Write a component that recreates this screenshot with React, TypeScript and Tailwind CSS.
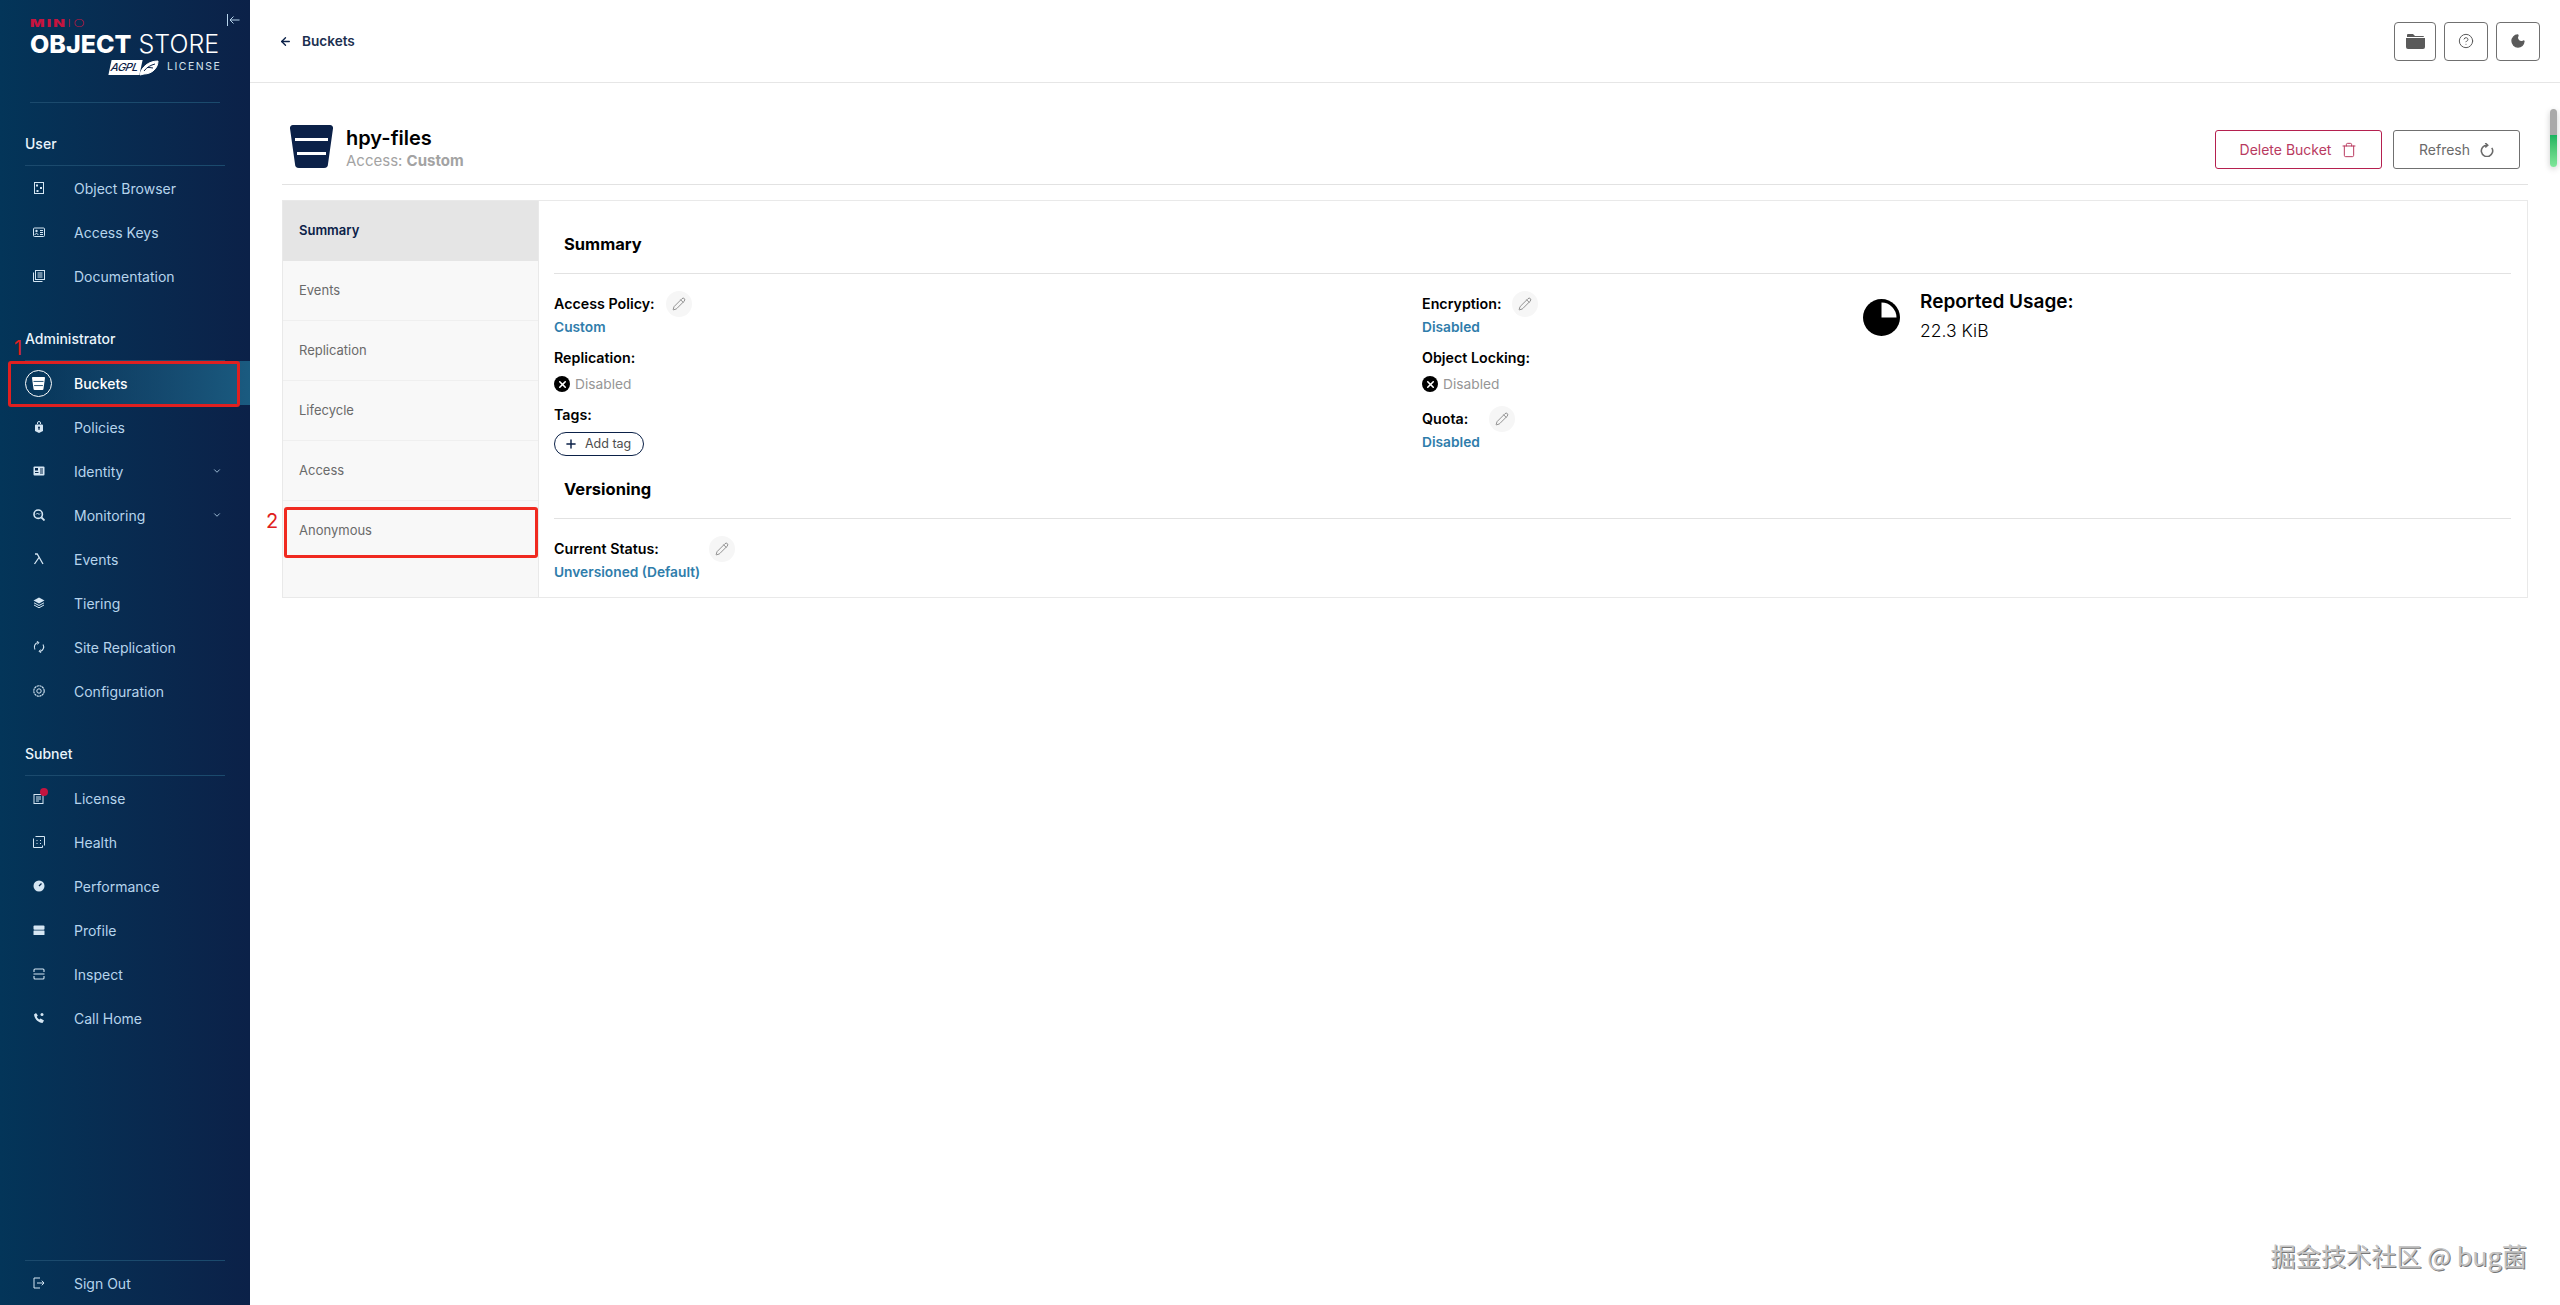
import { ReactNode } from "react";
import { ArrowLeft, ChevronDown, CircleHelp, Moon, Pencil, Plus, Trash, X } from "lucide-react";

type navItem = { label: string; icon: ReactNode; chevron?: boolean; active?: boolean };

const Svg = ({ children, className = "" }: { children: ReactNode; className?: string }) => (
    <svg viewBox="0 0 12 12" className={`w-[12px] h-[12px] ${className}`} fill="none" stroke="currentColor" strokeWidth="1">
        {children}
    </svg>
);

// Icones do menu lateral
const icons = {
    browser: <Svg><rect x="1.5" y="0.5" width="9" height="11" /><rect x="3" y="2.5" width="2" height="2" fill="currentColor" stroke="none" /><rect x="7" y="5" width="2" height="2" fill="currentColor" stroke="none" /><rect x="3.5" y="8" width="2" height="2" fill="currentColor" stroke="none" /></Svg>,
    keys: <Svg><rect x="0.5" y="2" width="11" height="8.5" rx="1" /><circle cx="3.5" cy="5" r="1.2" fill="currentColor" stroke="none" /><path d="M2 9c0-2 3-2 3 0M7 4.5h3M7 6.5h3M7 8.5h3" /></Svg>,
    docs: <Svg><rect x="2.5" y="0.5" width="9" height="9" /><path d="M0.5 2.5v9h9M4.5 3h5M4.5 5h5M4.5 7h5" /></Svg>,
    policies: <Svg><path d="M3 3.5h6a1 1 0 0 1 1 1V10l-4 2-4-2V4.500a1 1 0 0 1 1-1z" fill="currentColor" stroke="none" /><path d="M4.500 3V2a1.500 1.500 0 0 1 3 0v1" /><circle cx="6" cy="6.500" r="1" fill="#06284c" stroke="none" /><rect x="5.500" y="7" width="1" height="2" fill="#06284c" stroke="none" /></Svg>,
    identity: <Svg><rect x="0.500" y="1.500" width="11" height="9" rx="1" fill="currentColor" stroke="none" /><rect x="2" y="3" width="3" height="2.500" fill="#06284c" stroke="none" /><path d="M2 7.500h3.500M7 4h3M7 6h3M7 8h3" stroke="#06284c" /></Svg>,
    monitoring: <Svg><circle cx="5.200" cy="5.200" r="4.200" strokeWidth="1.600" /><path d="M8.500 8.500L11.500 11.500" strokeWidth="1.800" /><path d="M3 5.500l1.500-1.500 1.500 1.500 1-1" /></Svg>,
    events: <Svg><path d="M2 1h2.200L10 11M6 4.500L1.500 11" strokeWidth="1.300" /></Svg>,
    tiering: <Svg><path d="M6 0.500L11.500 3.500 6 6.500 0.500 3.500z" fill="currentColor" stroke="none" /><path d="M1 5.800L6 8.500l5-2.700M1 8L6 10.800 11 8" /></Svg>,
    replication: <Svg><path d="M2 8.500A4.700 4.700 0 0 1 5 1.500M10 3.500A4.700 4.700 0 0 1 7 10.500" strokeWidth="1.100" /><path d="M3.800 0.300L6 1.600 4.300 3.500M8.200 11.700L6 10.400 7.700 8.500" /></Svg>,
    config: <Svg><circle cx="6" cy="6" r="5.200" strokeDasharray="2.200 0.500" strokeWidth="1.100" /><circle cx="6" cy="6" r="2.200" /></Svg>,
    license: <Svg><rect x="1" y="2.500" width="9" height="9" /><path d="M3 5h5M3 7h5M3 9h3" /></Svg>,
    health: <Svg><path d="M2.500 0.500h9v9M0.500 2.500v9h9v-2" /><path d="M3.500 4.500h1M7 4.500h1M3.500 7.500h1M7 7.500h1" /></Svg>,
    performance: <Svg><circle cx="6" cy="6" r="5.500" fill="currentColor" stroke="none" /><path d="M6 6L8.500 3.500" stroke="#06284c" strokeWidth="1.200" /></Svg>,
    profile: <Svg><rect x="0.500" y="1.500" width="11" height="4.300" rx="1" fill="currentColor" stroke="none" /><rect x="0.500" y="6.600" width="11" height="4.300" rx="0.500" fill="currentColor" stroke="none" /></Svg>,
    inspect: <Svg><path d="M1 4V2a1 1 0 0 1 1-1h8a1 1 0 0 1 1 1v2M1 8v2a1 1 0 0 0 1 1h8a1 1 0 0 0 1-1V8M0.500 6h11" strokeWidth="1.100" /></Svg>,
    call: <Svg><path d="M1 2.500L3 1l1.800 2.600-1 1.200c.5 1.300 1.300 2.100 2.600 2.700l1.200-1L11 8.500 9.500 11C5 10.500 1.500 7 1 2.500z" fill="currentColor" stroke="none" /><circle cx="9" cy="2.500" r="1.500" fill="currentColor" stroke="none" /></Svg>,
    signOut: <Svg><path d="M7 1H1v10h6" /><path d="M4 6h7M8.800 3.700L11 6 8.800 8.300" /></Svg>,
};

const userItems: navItem[] = [
    { label: "Object Browser", icon: icons.browser },
    { label: "Access Keys", icon: icons.keys },
    { label: "Documentation", icon: icons.docs },
];

const adminItems: navItem[] = [
    { label: "Buckets", active: true, icon: null },
    { label: "Policies", icon: icons.policies },
    { label: "Identity", icon: icons.identity, chevron: true },
    { label: "Monitoring", icon: icons.monitoring, chevron: true },
    { label: "Events", icon: icons.events },
    { label: "Tiering", icon: icons.tiering },
    { label: "Site Replication", icon: icons.replication },
    { label: "Configuration", icon: icons.config },
];

const subnetItems: navItem[] = [
    { label: "License", icon: <span className="relative flex">{icons.license}<span className="absolute -top-[4px] left-[7px] w-[8px] h-[8px] rounded-full bg-[#c5143f]" /></span> },
    { label: "Health", icon: icons.health },
    { label: "Performance", icon: icons.performance },
    { label: "Profile", icon: icons.profile },
    { label: "Inspect", icon: icons.inspect },
    { label: "Call Home", icon: icons.call },
];

const tabs = ["Summary", "Events", "Replication", "Lifecycle", "Access", "Anonymous"];

const BucketGlyph = ({ className, bars }: { className: string; bars: string }) => (
    <svg viewBox="0 0 43 43" className={className}>
        <path d="M3 0h37a3 3 0 0 1 3 3.500L38 39a4 4 0 0 1-4 4H9a4 4 0 0 1-4-4L0 3.500A3 3 0 0 1 3 0z" fill="currentColor" />
        <rect x="5" y="13" width="33" height="3" fill={bars} />
        <rect x="7" y="27" width="29" height="3" fill={bars} />
    </svg>
);

function NavRow({ item }: { item: navItem }) {
    return (
        <div className={`h-[44px] flex items-center text-[14px] ${item.active ? "bg-gradient-to-r from-transparent to-[#1a5b80] text-white font-medium" : "text-[#b6d4ec]"}`}>
            <div className="w-[74px] pl-[25px] shrink-0 flex items-center">
                {item.active ? (
                    <span className="w-[27px] h-[27px] rounded-full border border-white flex items-center justify-center">
                        <BucketGlyph className="w-[13px] h-[13px] text-white" bars="#12466b" />
                    </span>
                ) : (
                    <span className="w-[27px] flex justify-center text-[#d5e6f3]">{item.icon}</span>
                )}
            </div>
            <span>{item.label}</span>
            {item.chevron && <ChevronDown size={10} className="ml-auto mr-[28px]" />}
        </div>
    );
}

function NavSection({ title, items }: { title: string; items: navItem[] }) {
    return (
        <div className="mt-[21px]">
            <div className="mx-[25px] h-[42px] pb-[2px] flex items-center text-[14px] font-medium text-[#eaf4fb] border-b border-[#1b4a6d]">
                {title}
            </div>
            {items.map((item) => <NavRow key={item.label} item={item} />)}
        </div>
    );
}

function Sidebar() {
    return (
        <aside className="w-[250px] h-full shrink-0 flex flex-col bg-gradient-to-r from-[#033559] to-[#0b2148]">
            <div className="relative mx-[30px] h-[103px] border-b border-[#1b4a6d] shrink-0">
                <div className="absolute left-0 top-[16px] text-[10.500px] leading-[16px] tracking-[1.5px] text-[#c5143f] scale-x-[1.45] origin-left">
                    <span className="font-black">MIN</span><span className="font-extralight">IO</span>
                </div>
                <div className="absolute left-0 top-[28px] text-[25px] leading-[32px] whitespace-nowrap text-white">
                    <span className="font-extrabold">OBJECT</span> <span className="font-light">STORE</span>
                </div>
                <div className="absolute left-[80px] top-[60px] w-[31px] h-[15px] flex items-center bg-white -skew-x-12 text-[#0b2148] text-[11px] leading-none italic font-medium pl-[1px] tracking-[-0.5px]">
                    AGPL
                </div>
                <svg viewBox="0 0 20 16" className="absolute left-[109px] top-[60px] w-[20px] h-[16px]" fill="none" stroke="#fff" strokeWidth="1">
                    <path d="M1 15C2 7 10 1 19 1c0 7-6 13-14 13z" fill="#fff" />
                    <path d="M5 11c3-4 7-6 11-7M8 7.500c2 0 4 0 6 .5" stroke="#0b2148" />
                </svg>
                <div className="absolute left-[137px] top-[60px] text-[10.500px] leading-[14px] tracking-[1.500px] text-[#d5e4ef]">LICENSE</div>
                <svg viewBox="0 0 13 12" className="absolute left-[197px] top-[14px] w-[13px] h-[12px] text-[#b6d4ec]" fill="none" stroke="currentColor">
                    <path d="M0.500 0v12M12.500 6H3M6.500 2.500L3 6l3.500 3.500" />
                </svg>
            </div>
            <NavSection title="User" items={userItems} />
            <NavSection title="Administrator" items={adminItems} />
            <NavSection title="Subnet" items={subnetItems} />
            <div className="mt-auto">
                <div className="mx-[25px] border-t border-[#1b4a6d]" />
                <NavRow item={{ label: "Sign Out", icon: icons.signOut }} />
            </div>
        </aside>
    );
}

function EditButton() {
    return (
        <span className="w-[26px] h-[26px] rounded-full bg-[#f6f6f6] flex items-center justify-center text-[#6b6b6b]">
            <Pencil size={14} strokeWidth={1.25} />
        </span>
    );
}

function Label({ children }: { children: ReactNode }) {
    return <div className="text-[14.250px] leading-[20px] font-semibold text-black">{children}</div>;
}

function BlueValue({ children }: { children: ReactNode }) {
    return <div className="text-[13.750px] leading-[20px] font-semibold text-[#2f7dab]">{children}</div>;
}

function DisabledValue() {
    return (
        <div className="flex items-center gap-[5px] text-[13.750px] leading-[20px] text-[#969696]">
            <span className="w-[16px] h-[16px] rounded-full bg-black flex items-center justify-center">
                <X size={11} strokeWidth={3.5} className="text-white" />
            </span>
            Disabled
        </div>
    );
}

function Summary() {
    return (
        <section className="flex-1 pl-[15px] pr-[16px] pt-[25px] min-w-0">
            <h2 className="pl-[10px] h-[36px] text-[16.500px] leading-[36px] font-bold text-black">Summary</h2>
            <div className="mt-[11px] border-t border-[#e2e2e2]" />
            <div className="grid grid-cols-[868px_441px_1fr] pt-[17px]">
                <div className="flex flex-col">
                    <div className="flex items-center gap-[11px] h-[26px]"><Label>Access Policy:</Label><EditButton /></div>
                    <BlueValue>Custom</BlueValue>
                    <div className="mt-[11px]"><Label>Replication:</Label></div>
                    <div className="mt-[6px]"><DisabledValue /></div>
                    <div className="mt-[11px]"><Label>Tags:</Label></div>
                    <div className="mt-[7px] w-[90px] h-[24px] rounded-full border border-[#0b2148] flex items-center pl-[9px] gap-[7px] text-[12.500px] text-[#4e4e4e]">
                        <Plus size={14} strokeWidth={2.5} className="text-[#0b2148]" />
                        Add tag
                    </div>
                </div>
                <div className="flex flex-col">
                    <div className="flex items-center gap-[10px] h-[26px]"><Label>Encryption:</Label><EditButton /></div>
                    <BlueValue>Disabled</BlueValue>
                    <div className="mt-[11px]"><Label>Object Locking:</Label></div>
                    <div className="mt-[6px]"><DisabledValue /></div>
                    <div className="mt-[12px] flex items-center gap-[21px] h-[26px]"><Label>Quota:</Label><EditButton /></div>
                    <BlueValue>Disabled</BlueValue>
                </div>
                <div className="flex items-start gap-[20px]">
                    <svg viewBox="0 0 37 37" className="w-[37px] h-[37px] mt-[8px] shrink-0">
                        <circle cx="18.500" cy="18.500" r="18.500" fill="#000" />
                        <path d="M18.500 3.500a15 15 0 0 1 15 15H18.500z" fill="#fff" />
                    </svg>
                    <div className="-mt-[1px]">
                        <div className="text-[19px] leading-[24px] font-semibold text-black">Reported Usage:</div>
                        <div className="mt-[5px] text-[17.500px] leading-[24px] font-light text-black">22.3 KiB</div>
                    </div>
                </div>
            </div>
            <h2 className="pl-[10px] mt-[15px] h-[36px] text-[16.500px] leading-[36px] font-bold text-black">Versioning</h2>
            <div className="mt-[11px] border-t border-[#e2e2e2]" />
            <div className="pt-[17px]">
                <div className="flex items-center gap-[50px] h-[26px]"><Label>Current Status:</Label><EditButton /></div>
                <BlueValue>Unversioned (Default)</BlueValue>
            </div>
        </section>
    );
}

export default function App() {
    return (
        <div className="relative w-full h-screen overflow-hidden flex bg-white font-['Inter',sans-serif]">
            <Sidebar />
            <main className="flex-1 min-w-0">
                <header className="h-[83px] border-b border-[#e6e6e6] flex items-center pl-[29px] pr-[20px]">
                    <ArrowLeft size={13} strokeWidth={2.5} className="text-[#0b2148]" />
                    <span className="ml-[10px] text-[13.600px] font-semibold text-[#1c3050]">Buckets</span>
                    <div className="ml-auto flex items-center gap-[8px] text-[#5a5a5a]">
                        <button className="w-[42px] h-[39px] rounded-[4px] border border-[#707070] flex items-center justify-center">
                            <svg viewBox="0 0 19 16" className="w-[19px] h-[16px]" fill="currentColor">
                                <path d="M1 4V2a1 1 0 0 1 1-1h5l2 2h8a1 1 0 0 1 1 1z" />
                                <path d="M0 5h19v9a2 2 0 0 1-2 2H2a2 2 0 0 1-2-2z" />
                            </svg>
                        </button>
                        <button className="w-[44px] h-[39px] rounded-[4px] border border-[#707070] flex items-center justify-center"><CircleHelp size={16} strokeWidth={1.5} /></button>
                        <button className="w-[44px] h-[39px] rounded-[4px] border border-[#707070] flex items-center justify-center"><Moon size={16} fill="currentColor" /></button>
                    </div>
                </header>
                <div className="pl-[32px] pr-[32px] pt-[42px]">
                    <div className="h-[60px] border-b border-[#e2e2e2] flex pl-[8px]">
                        <BucketGlyph className="w-[43px] h-[43px] text-[#0b2148]" bars="#ffffff" />
                        <div className="ml-[13px]">
                            <h1 className="text-[20px] leading-[26px] font-semibold text-black">hpy-files</h1>
                            <p className="text-[15px] leading-[20px] text-[#a3a3a3]">Access: <b className="font-bold">Custom</b></p>
                        </div>
                        <div className="ml-auto mr-[8px] flex gap-[11px] mt-[5px]">
                            <button className="w-[167px] h-[39px] rounded-[3px] border border-[#b5204f] text-[#b93a5f] text-[14px] flex items-center justify-center gap-[10px]">
                                Delete Bucket <Trash size={16} strokeWidth={1.5} />
                            </button>
                            <button className="w-[127px] h-[39px] rounded-[3px] border border-[#707070] text-[#6a6a6a] text-[14px] flex items-center justify-center gap-[10px]">
                                Refresh
                                <svg viewBox="0 0 16 16" className="w-[14px] h-[14px]" fill="none" stroke="currentColor" strokeWidth="1.800">
                                    <path d="M13.500 5.500A6.500 6.500 0 1 1 8 2.500" />
                                    <path d="M6 0l2.800 2.500L6 5" />
                                </svg>
                            </button>
                        </div>
                    </div>
                    <div className="mt-[15px] h-[398px] border border-[#e9e9e9] flex">
                        <nav className="w-[256px] shrink-0 bg-[#f8f8f8] border-r border-[#e9e9e9]">
                            {tabs.map((tab, index) => (
                                <div
                                    key={tab}
                                    className={`h-[60px] flex items-center pl-[16px] text-[13px] border-b ${index === 0 ? "bg-[#e5e5e5] border-[#e5e5e5] font-semibold text-[#0b2148]" : "border-[#efefef] text-[#6a6a6a]"} ${index === 5 ? "border-transparent" : ""}`}
                                >
                                    {tab}
                                </div>
                            ))}
                        </nav>
                        <Summary />
                    </div>
                </div>
            </main>

            {/* Marcacoes vermelhas por cima do print */}
            <div className="absolute left-[8px] top-[361px] w-[232px] h-[46px] rounded-[3px] border-[3px] border-[#e02020]" />
            <div className="absolute left-[14px] top-[336px] text-[20px] leading-[24px] text-[#e02020]">1</div>
            <div className="absolute left-[284px] top-[507px] w-[254px] h-[51px] rounded-[3px] border-[3px] border-[#f02a20]" />
            <div className="absolute left-[266px] top-[509px] text-[20px] leading-[24px] text-[#e02020]">2</div>

            {/* Indicador flutuante de rolagem */}
            <div className="absolute left-[2550px] top-[109px] w-[7px] h-[58px] rounded-full overflow-hidden shadow-[0_2px_6px_rgba(0,0,0,0.2)] flex flex-col">
                <div className="h-[26px] bg-[#a9a9a9]" />
                <div className="flex-1 bg-gradient-to-b from-[#16b45f] to-[#7fe79a]" />
            </div>

            <div className="absolute right-[33px] bottom-[32px] text-[25.200px] leading-[36px] text-[#c4c4c4] font-['Noto_Sans_CJK_SC','Noto_Sans',sans-serif] [text-shadow:1px_1px_0_#777]">
                掘金技术社区 @ bug菌
            </div>
        </div>
    );
}
